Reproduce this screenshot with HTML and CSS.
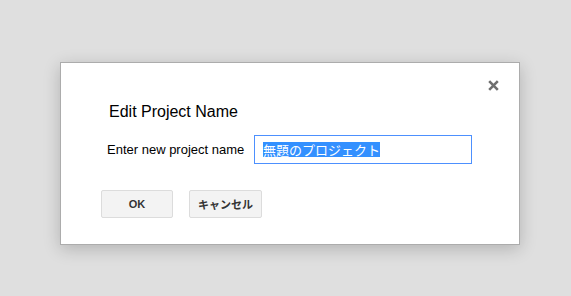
FILE: index.html
```html
<!DOCTYPE html>
<html lang="ja">
<head>
  <meta charset="UTF-8">
  <title>Edit Project Name</title>
  <link rel="stylesheet" href="styles.css">
</head>
<body>
  <div class="dialog">
    <button class="close-btn" aria-label="Close">
      <svg width="11" height="11" viewBox="0 0 11 11">
        <path d="M1.2 1.2 L9.8 9.8 M9.8 1.2 L1.2 9.8" stroke="#6e6e6e" stroke-width="2.6" stroke-linecap="butt"/>
      </svg>
    </button>
    <h1 class="dialog-title">Edit Project Name</h1>
    <div class="field-row">
      <label class="field-label">Enter new project name</label>
      <div class="text-input"><span class="selected">無題のプロジェクト</span></div>
    </div>
    <div class="button-row">
      <button class="btn">OK</button>
      <button class="btn">キャンセル</button>
    </div>
  </div>
</body>
</html>
```

FILE: styles.css
```css
* {
  margin: 0;
  padding: 0;
  box-sizing: border-box;
}

body {
  background-color: #dfdfdf;
  font-family: "Liberation Sans", Arial, "Noto Sans CJK JP", sans-serif;
  color: #222;
  padding-top: 62px;
  height: 296px;
  overflow: hidden;
}

.dialog {
  position: relative;
  width: 460px;
  margin-left: 60px;
  background-color: #fff;
  border: 1px solid #acacac;
  box-shadow: 0 4px 16px rgba(0, 0, 0, 0.2);
  padding: 39px 40px 26px;
}

.close-btn {
  position: absolute;
  top: 17px;
  right: 20px;
  width: 11px;
  height: 11px;
  background: none;
  border: none;
  display: flex;
  cursor: pointer;
}

.dialog-title {
  font-size: 16px;
  font-weight: normal;
  line-height: 20px;
  color: #000;
  margin-left: 8px;
}

.field-row {
  display: flex;
  align-items: center;
  margin-top: 13px;
  margin-left: 6px;
}

.field-label {
  font-size: 13px;
  line-height: 15px;
  color: #000;
  width: 147px;
}

.text-input {
  width: 218px;
  height: 29px;
  border: 1px solid #4d90fe;
  padding-left: 8px;
  display: flex;
  align-items: center;
  font-family: "Noto Sans CJK JP", sans-serif;
  font-size: 13px;
}

.selected {
  display: inline-block;
  height: 15px;
  line-height: 15px;
  background-color: #3390ff;
  color: #fff;
}

.button-row {
  display: flex;
  gap: 16px;
  margin-top: 26px;
}

.btn {
  min-width: 72px;
  height: 28px;
  padding: 0 8px;
  background-color: #f3f3f3;
  border: 1px solid #dcdcdc;
  border-radius: 2px;
  color: #333;
  font-family: "Liberation Sans", Arial, "Noto Sans CJK JP", sans-serif;
  font-size: 11px;
  font-weight: bold;
}
```
